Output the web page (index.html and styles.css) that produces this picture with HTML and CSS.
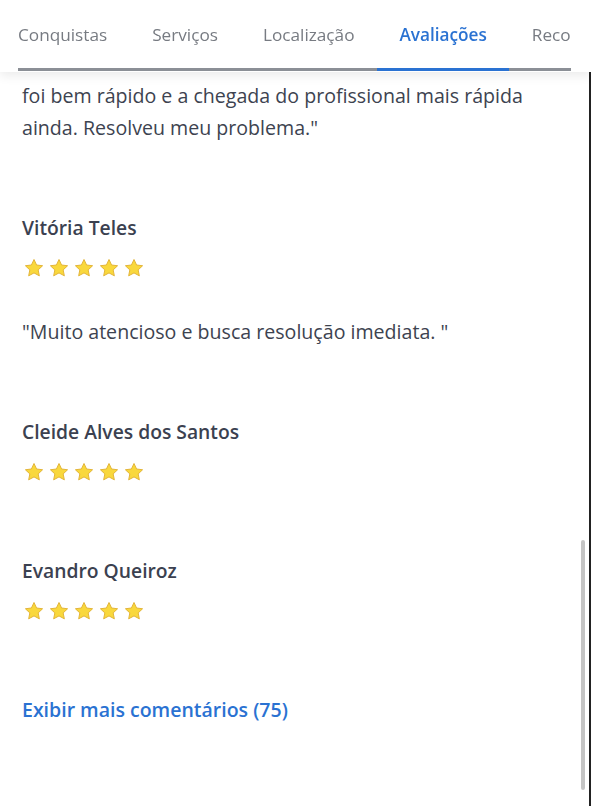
FILE: index.html
```html
<!DOCTYPE html>
<html>
<head>
    <title>Avaliações</title>
    <link rel="stylesheet" href="styles.css">
</head>
<body>
    <div class="tabbar">
        <div class="tabs">
            <div class="tab-strip">
                <span class="tab">Conquistas</span>
                <span class="tab">Serviços</span>
                <span class="tab">Localização</span>
                <span class="tab active">Avaliações</span>
                <span class="tab">Recomendações</span>
            </div>
        </div>
    </div>

    <div class="content">
        <div class="review">
            <p class="comment">foi bem rápido e a chegada do profissional mais rápida ainda. Resolveu meu problema."</p>
        </div>

        <div class="review">
            <div class="name">Vitória Teles</div>
            <div class="stars" data-rating="5"></div>
            <p class="comment">"Muito atencioso e busca resolução imediata. "</p>
        </div>

        <div class="review">
            <div class="name">Cleide Alves dos Santos</div>
            <div class="stars" data-rating="5"></div>
        </div>

        <div class="review">
            <div class="name">Evandro Queiroz</div>
            <div class="stars" data-rating="5"></div>
        </div>

        <a class="more" href="#">Exibir mais comentários (75)</a>
    </div>

    <div class="scrollbar"></div>
    <div class="edge"></div>

    <script>
        const star = '<svg width="20" height="20" viewBox="0 0 24 24"><path d="M12 1.8l3.1 6.6 7.2.9-5.3 5 1.4 7.1L12 17.9l-6.4 3.5 1.4-7.1-5.3-5 7.2-.9z" fill="#f9d83c" stroke="#e3b53a" stroke-width="1.2" stroke-linejoin="round"/></svg>';
        document.querySelectorAll('.stars').forEach(el => {
            const n = parseInt(el.dataset.rating, 10);
            el.innerHTML = star.repeat(n);
        });
    </script>
</body>
</html>
```

FILE: styles.css
```css
body {
    margin: 0;
    font-family: "Open Sans", sans-serif;
    color: #3c4250;
    background-color: #fff;
}
.tabbar {
    position: fixed;
    top: 0;
    left: 0;
    right: 0;
    height: 72px;
    background-color: #fff;
    box-shadow: 0 4px 10px rgba(0, 0, 0, 0.08);
    z-index: 2;
}
.tabs {
    margin: 0 20px 0 18px;
    height: 71px;
    background: linear-gradient(#8b8f96, #8b8f96) bottom / 100% 3px no-repeat;
    overflow: hidden;
}
.tab-strip {
    display: flex;
    margin-left: -22.5px;
    height: 100%;
}
.tab {
    flex: none;
    padding: 0 22.5px;
    line-height: 70px;
    font-size: 17.2px;
    color: #777b82;
    white-space: nowrap;
    box-sizing: border-box;
    height: 71px;
}
.tab.active {
    color: #2a72d2;
    font-weight: 600;
    border-bottom: 3px solid #2a72d2;
}
.content {
    padding: 80px 22px 60px 22px;
}
.review {
    margin-bottom: 68px;
}
.name {
    font-size: 19.3px;
    font-weight: 600;
    line-height: 32px;
    color: #3b4150;
}
.stars {
    display: flex;
    gap: 5px;
    margin-top: 14px;
    margin-left: 2px;
    height: 20px;
}
.stars + .comment {
    margin-top: 38px;
}
.review:not(:has(.comment)) {
    margin-bottom: 73px;
}
.comment {
    margin: 0;
    font-size: 19.6px;
    line-height: 32px;
    color: #3d4350;
    max-width: 530px;
}
.more {
    display: block;
    font-size: 19.5px;
    line-height: 32px;
    font-weight: 600;
    color: #2a72d2;
    text-decoration: none;
}
.scrollbar {
    position: fixed;
    right: 6px;
    top: 540px;
    width: 4px;
    height: 250px;
    background-color: #c4c4c4;
    border-radius: 2px;
}
.edge {
    position: fixed;
    right: 0;
    top: 0;
    bottom: 0;
    width: 2px;
    background-color: #222;
}
```
